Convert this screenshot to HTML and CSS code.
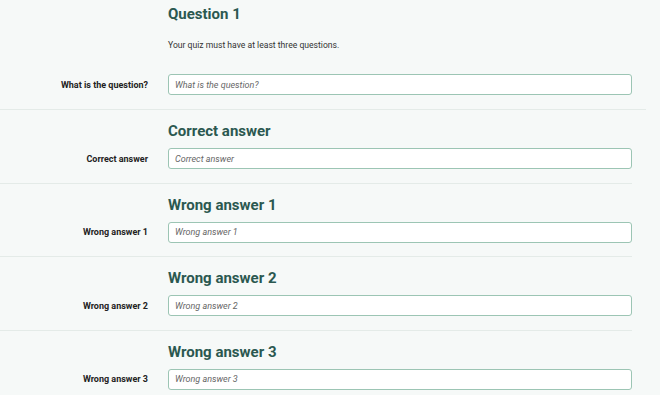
FILE: index.html
```html
<!DOCTYPE html>
<html lang="en">
<head>
    <meta charset="UTF-8">
    <meta name="viewport" content="width=device-width, initial-scale=1.0">
    <title>New Quiz</title>
    <link rel="stylesheet" href="styles.css">
</head>
<body>
    <form class="quiz-form">
        <div class="section intro">
            <h2>Question 1</h2>
            <p class="hint">Your quiz must have at least three questions.</p>
            <label for="question">What is the question?</label>
            <input type="text" id="question" placeholder="What is the question?">
        </div>

        <div class="section">
            <h2>Correct answer</h2>
            <label for="correct">Correct answer</label>
            <input type="text" id="correct" placeholder="Correct answer">
        </div>

        <div class="section">
            <h2>Wrong answer 1</h2>
            <label for="wrong1">Wrong answer 1</label>
            <input type="text" id="wrong1" placeholder="Wrong answer 1">
        </div>

        <div class="section">
            <h2>Wrong answer 2</h2>
            <label for="wrong2">Wrong answer 2</label>
            <input type="text" id="wrong2" placeholder="Wrong answer 2">
        </div>

        <div class="section">
            <h2>Wrong answer 3</h2>
            <label for="wrong3">Wrong answer 3</label>
            <input type="text" id="wrong3" placeholder="Wrong answer 3">
        </div>
    </form>
</body>
</html>
```

FILE: styles.css
```css
body {
    margin: 0;
    background-color: #f6f9f8;
    font-family: Roboto, Arial, sans-serif;
    color: #222;
}

.quiz-form {
    width: 632px;
}

.section {
    display: grid;
    grid-template-columns: 148px 464px;
    column-gap: 20px;
    align-items: center;
    padding: 11px 0 13.67px;
    border-bottom: 1px solid #e4ebe8;
}

/* the question block runs a bit wider than the answers */
.section.intro {
    width: 646px;
    padding: 4px 0 14px;
}

.section h2 {
    grid-column: 2;
    margin: 0 0 7px;
    font-size: 15px;
    line-height: 20px;
    font-weight: bold;
    color: #2b5850;
}

.hint {
    grid-column: 2;
    margin: 7.5px 0 23.5px;
    font-size: 8.6px;
    line-height: 12px;
    color: #333;
}

.section label {
    grid-column: 1;
    text-align: right;
    font-size: 9px;
    font-weight: bold;
    color: #222;
}

.section input {
    grid-column: 2;
    box-sizing: border-box;
    height: 21px;
    margin: 0;
    padding: 0 6px;
    border: 1px solid #9cc5b4;
    border-radius: 3px;
    background-color: #fff;
    font-family: Roboto, Arial, sans-serif;
    font-size: 9px;
    font-style: italic;
}

.section input::placeholder {
    color: #666;
}
```
